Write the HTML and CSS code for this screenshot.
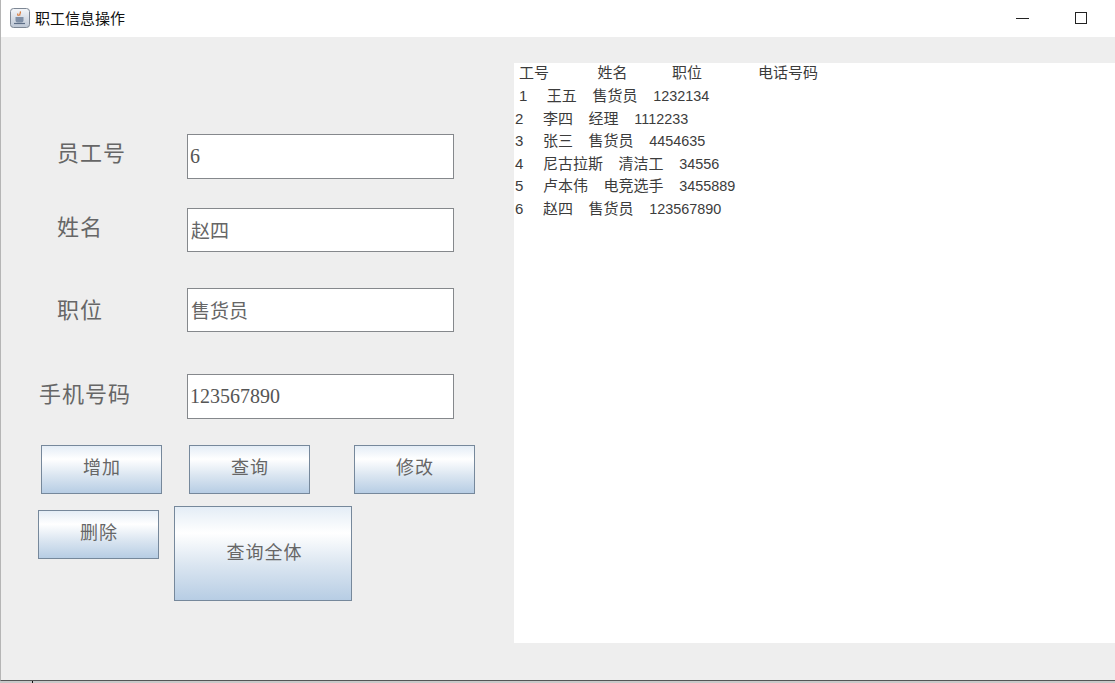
FILE: index.html
```html
<!DOCTYPE html>
<html lang="zh-CN">
<head>
  <meta charset="UTF-8" />
  <title>职工信息操作</title>
  <link rel="stylesheet" href="styles.css">
</head>
<body>
<div class="window">
  <div class="titlebar">
    <svg class="app-icon" width="20" height="20" viewBox="0 0 20 20">
      <defs>
        <linearGradient id="iconBg" x1="0" y1="0" x2="0" y2="1">
          <stop offset="0" stop-color="#f4f6f9"/>
          <stop offset="1" stop-color="#bcc6d4"/>
        </linearGradient>
      </defs>
      <rect x="0.5" y="0.5" width="19" height="19" rx="3" fill="url(#iconBg)" stroke="#7d8794"/>
      <path d="M10 3.5c1.5 1.6-1.2 2.4 0 4.2M8 5.5c-.8 1 .2 1.6.2 2.4" fill="none" stroke="#d9722c" stroke-width="1.2"/>
      <path d="M5.5 9h8v3.5c0 1.2-1 2-2 2h-4c-1 0-2-.8-2-2z" fill="#7f8fa6"/>
      <path d="M4 15.5h11" stroke="#5c6d86" stroke-width="1.2"/>
    </svg>
    <span class="title-text">职工信息操作</span>
    <div class="controls">
      <span class="minimize"></span>
      <span class="maximize"></span>
    </div>
  </div>

  <div class="content">
    <div class="form-panel">
      <div class="field field-id">
        <label class="field-label">员工号</label>
        <div class="input">6</div>
      </div>
      <div class="field field-name">
        <label class="field-label">姓名</label>
        <div class="input input-cjk">赵四</div>
      </div>
      <div class="field field-job">
        <label class="field-label">职位</label>
        <div class="input input-cjk">售货员</div>
      </div>
      <div class="field field-phone">
        <label class="field-label">手机号码</label>
        <div class="input">123567890</div>
      </div>

      <div class="buttons-top">
        <button type="button" class="btn">增加</button>
        <button type="button" class="btn btn-query">查询</button>
        <button type="button" class="btn btn-edit">修改</button>
      </div>
      <div class="buttons-bottom">
        <button type="button" class="btn btn-delete">删除</button>
        <button type="button" class="btn btn-all">查询全体</button>
      </div>
    </div>

    <div class="output">
      <div class="output-head">
        <span class="col-id">工号</span>
        <span class="col-name">姓名</span>
        <span class="col-job">职位</span>
        <span>电话号码</span>
      </div>
      <div class="output-rows"> 1     王五    售货员    <span class="num">1232134</span>
2     李四    经理    <span class="num">1112233</span>
3     张三    售货员    <span class="num">4454635</span>
4     尼古拉斯    清洁工    <span class="num">34556</span>
5     卢本伟    电竞选手    <span class="num">3455889</span>
6     赵四    售货员    <span class="num">123567890</span></div>
    </div>
  </div>
</div>
<div class="desk-tick"></div>
</body>
</html>
```
FILE: styles.css
```css
* {
  box-sizing: border-box;
}

html, body {
  margin: 0;
  height: 100%;
  overflow: hidden;
}

body {
  background-color: #c9c9c9;
  font-family: "Noto Sans CJK SC", sans-serif;
}

.window {
  height: 681px;
  display: flex;
  flex-direction: column;
  background: #eeeeee;
  border-left: 1px solid #b5b5b5;
  border-bottom: 1px solid #555;
}

.desk-tick {
  width: 1px;
  height: 2px;
  margin-left: 32px;
  background: #111;
}

.titlebar {
  height: 37px;
  flex-shrink: 0;
  display: flex;
  align-items: center;
  background: white;
  padding-left: 9px;
  padding-bottom: 2px;
}

.app-icon {
  margin-right: 5px;
}

.title-text {
  font-size: 15px;
  color: #111;
}

.controls {
  margin-left: auto;
  margin-top: 2px;
  display: flex;
  align-items: center;
  padding-right: 28px;
}

.minimize {
  width: 13px;
  height: 1px;
  background: #222;
  margin-right: 46px;
}

.maximize {
  width: 12px;
  height: 12px;
  border: 1px solid #222;
  margin-bottom: 1px;
}

.content {
  flex: 1;
  display: flex;
  align-items: flex-start;
  min-height: 0;
}

.form-panel {
  width: 513px;
  flex-shrink: 0;
  padding-top: 97px;
}

.field {
  display: flex;
  align-items: center;
}

.field-label {
  width: 130px;
  margin-left: 56px;
  flex-shrink: 0;
  font-size: 22px;
  letter-spacing: 1px;
  color: #666;
}

.input {
  width: 267px;
  height: 45px;
  background: white;
  border: 1px solid #85888c;
  padding-left: 2px;
  display: flex;
  align-items: center;
  font-family: "Liberation Serif", "Noto Sans CJK SC", serif;
  font-size: 20px;
  color: #555;
}

.input-cjk {
  height: 44px;
  padding-left: 3px;
  padding-bottom: 2px;
  font-size: 19px;
  color: #666;
}

.field-id .field-label {
  margin-bottom: 11px;
}

.field-name {
  margin-top: 29px;
}

.field-name .field-label {
  margin-bottom: 11px;
}

.field-job {
  margin-top: 36px;
}

.field-job .field-label {
  margin-bottom: 5px;
}

.field-phone {
  margin-top: 42px;
}

.field-phone .field-label {
  width: 148px;
  margin-left: 38px;
  margin-bottom: 9px;
}

.buttons-top {
  display: flex;
  margin-top: 26px;
  padding-left: 40px;
}

.buttons-bottom {
  display: flex;
  align-items: flex-start;
  margin-top: 12px;
  padding-left: 37px;
}

.btn {
  width: 121px;
  height: 49px;
  padding: 0 0 8px 1px;
  border: 1px solid #76889b;
  background: linear-gradient(to bottom, #e4edf6 0%, #ffffff 28%, #dbe6f1 62%, #b7cde4 100%);
  font-family: "Noto Sans CJK SC", sans-serif;
  font-size: 18px;
  color: #666;
  letter-spacing: 1px;
}

.btn-query {
  margin-left: 27px;
}

.btn-edit {
  margin-left: 44px;
}

.btn-delete {
  margin-top: 4px;
}

.btn-all {
  width: 178px;
  height: 95px;
  margin-left: 15px;
  padding-left: 3px;
  padding-bottom: 6px;
}

.output {
  flex: 1;
  height: 580px;
  margin-top: 26px;
  background: white;
  padding-left: 1px;
  font-family: "Liberation Sans", "Noto Sans CJK SC", sans-serif;
  font-size: 15px;
  color: #3c3c3c;
}

.output-head {
  display: flex;
  height: 20px;
  padding-left: 4px;
  line-height: 20px;
}

.col-id {
  width: 78.5px;
}

.col-name {
  width: 74.5px;
}

.col-job {
  width: 86px;
}

.output-rows {
  margin-top: 2px;
  line-height: 22.5px;
  white-space: pre;
  word-spacing: -0.25px;
}

.num {
  font-size: 14.4px;
}
```
